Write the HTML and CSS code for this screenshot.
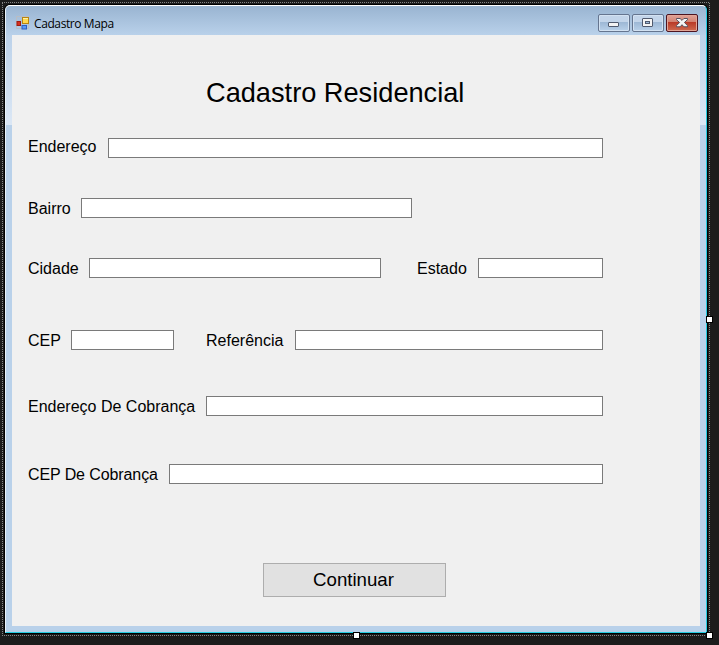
FILE: index.html
```html
<!DOCTYPE html>
<html lang="pt-BR">
<head>
<meta charset="utf-8">
<title>Cadastro Mapa</title>
<link rel="stylesheet" href="styles.css">
</head>
<body>
<div class="designer">
  <svg class="selection" width="719" height="645" shape-rendering="crispEdges">
    <path class="dots" d="M2 2.5H710M2 635.5H710M2.5 3V636M709.5 3V636"/>
    <g class="handles"><path d="M706.5 316.5h6v6h-6zM353.500 632.500h6v6h-6zM706.500 632.500h6v6h-6z"/></g>
  </svg>
  <main class="window">
    <header class="titlebar">
      <svg class="app-icon" width="14" height="14" viewBox="0 0 14 14">
        <path d="M.5 .5h12v12H.5z" fill="none" stroke="#b9bdc3"/>
        <rect x="1" y="5.500" width="3.500" height="4" fill="#d8301d" stroke="#9d1a10"/>
        <rect x="6.500" y="1.500" width="6" height="6" fill="#ffd84e" stroke="#b9850f"/>
        <path d="M7 2.500h5" stroke="#fff0a5"/>
        <rect x="6" y="9.500" width="4.500" height="3.500" fill="#5b9af5" stroke="#2d5fc0"/>
      </svg>
      <span class="caption">Cadastro Mapa</span>
      <div class="controls">
        <button class="control" aria-label="Minimizar"><svg width="32" height="18"><rect x="10.500" y="8.500" width="10" height="4" rx=".5" fill="#f4f4f4" stroke="#505a6e"/></svg></button>
        <button class="control" aria-label="Maximizar"><svg width="32" height="18"><rect x="10.500" y="4.500" width="10" height="8" rx=".5" fill="#f4f4f4" stroke="#505a6e"/><rect x="13.500" y="7.500" width="4" height="2" fill="#9cb9d8" stroke="#505a6e"/></svg></button>
        <button class="control close" aria-label="Fechar"><svg width="32" height="18"><path d="M10.500 4.500h3.600l1.900 1.900 1.900-1.900h3.600v1.200L18.400 8.500l3.100 3.100v1.200h-3.600L16 10.700l-1.900 2.100h-3.600v-1.200l3.100-3.100-3.100-2.800z" fill="#f4f4f4" stroke="#57525f"/></svg></button>
      </div>
    </header>
    <form class="client">
      <h1>Cadastro Residencial</h1>
      <div class="row r1"><label class="raised" for="endereco">Endereço</label><input id="endereco"></div>
      <div class="row r2"><label for="bairro">Bairro</label><input id="bairro"></div>
      <div class="row r3"><label for="cidade">Cidade</label><input id="cidade"><label for="estado">Estado</label><input id="estado"></div>
      <div class="row r4"><label for="cep">CEP</label><input id="cep"><label for="ref">Referência</label><input id="ref"></div>
      <div class="row r5"><label for="cobranca">Endereço De Cobrança</label><input id="cobranca"></div>
      <div class="row r6"><label for="cepcob">CEP De Cobrança</label><input id="cepcob"></div>
      <button class="submit" type="button">Continuar</button>
    </form>
  </main>
</div>
</body>
</html>
```
FILE: styles.css
```css
* { box-sizing: border-box; }
body {
  margin: 0;
  background: #1c1c1c;
  color: #000;
  font-family: "Liberation Sans", Arial, sans-serif;
}
.designer {
  position: relative;
  width: 719px;
  height: 645px;
  padding: 5px 0 0 5px;
  overflow: hidden;
}
.selection { position: absolute; left: 0; top: 0; z-index: 1; }
.dots { fill: none; stroke: #858585; stroke-dasharray: 1 1; }
.handles { fill: #fff; stroke: #000; }
.window {
  width: 702px;
  height: 628px;
  padding: 0 5px 5px 6px;
  border: 1px solid #24cde3;
  border-top-color: #fff;
  border-left-color: #e9f2fa;
  border-radius: 5px 5px 0 0;
  background:
    linear-gradient(#99b4d1, #b9d1ea) 0 0 / 100% 29px no-repeat,
    linear-gradient(#bcd2ea, #dbe7f5) 0 29px / 100% 90px no-repeat,
    #b9d1ea;
  box-shadow: 0 0 0 1px #000;
}
.titlebar {
  display: flex;
  height: 29px;
  padding: 0 3px 0 4px;
}
.app-icon { margin-top: 10px; }
.caption {
  margin: 9px 0 0 4px;
  font: 12px/18px "Open Sans", sans-serif;
  letter-spacing: -.4px;
  white-space: nowrap;
}
.controls { display: flex; gap: 2px; margin: 8px 0 0 auto; }
.control {
  width: 32px;
  height: 18px;
  padding: 0;
  border: 1px solid #65758f;
  border-radius: 2px;
  background: linear-gradient(#c3d5ea 0 45%, #9db8d5 46%, #b9d1ea);
  box-shadow: inset 0 0 0 1px #d3e2f2;
}
.control svg { display: block; margin: -1px; }
.close {
  border-color: #4d1420;
  background: linear-gradient(#e0a398, #d1806f 45%, #b93a27 46%, #cf6b50);
  box-shadow: inset 0 0 0 1px #e2a596;
}
.client {
  width: 688px;
  height: 591px;
  padding: 39px 0 0 16px;
  background: #f0f0f0;
}
h1 {
  width: 259px;
  height: 36px;
  margin: 0 0 28px 178px;
  font-size: 27.2px;
  font-weight: 400;
  line-height: 38px;
  white-space: nowrap;
}
.row { display: grid; height: 20px; }
label { font-size: 16px; line-height: 22px; white-space: nowrap; }
.raised { line-height: 17px; }
input {
  width: 100%;
  height: 20px;
  margin: 0;
  padding: 1px 3px;
  border: 1px solid #7a7a7a;
  border-radius: 0;
  background: #fff;
  font: 14px "Liberation Sans", sans-serif;
}
.r1 { grid-template-columns: 80px 495px; margin-bottom: 40px; }
.r2 { grid-template-columns: 53px 331px; margin-bottom: 40px; }
.r3 { grid-template-columns: 61px 328px 61px 125px; margin-bottom: 52px; }
.r3 #cidade { width: 292px; }
.r4 { grid-template-columns: 43px 135px 89px 308px; margin-bottom: 46px; }
.r4 #cep { width: 103px; }
.r5 { grid-template-columns: 178px 397px; margin-bottom: 48px; }
.r6 { grid-template-columns: 141px 434px; margin-bottom: 79px; }
.r6 label { letter-spacing: -.1px; }
.submit {
  display: block;
  width: 183px;
  height: 34px;
  margin-left: 235px;
  padding: 0 2px 0 0;
  border: 1px solid #adadad;
  border-radius: 0;
  background: #e1e1e1;
  color: #000;
  font: 18.667px "Liberation Sans", sans-serif;
}
```
